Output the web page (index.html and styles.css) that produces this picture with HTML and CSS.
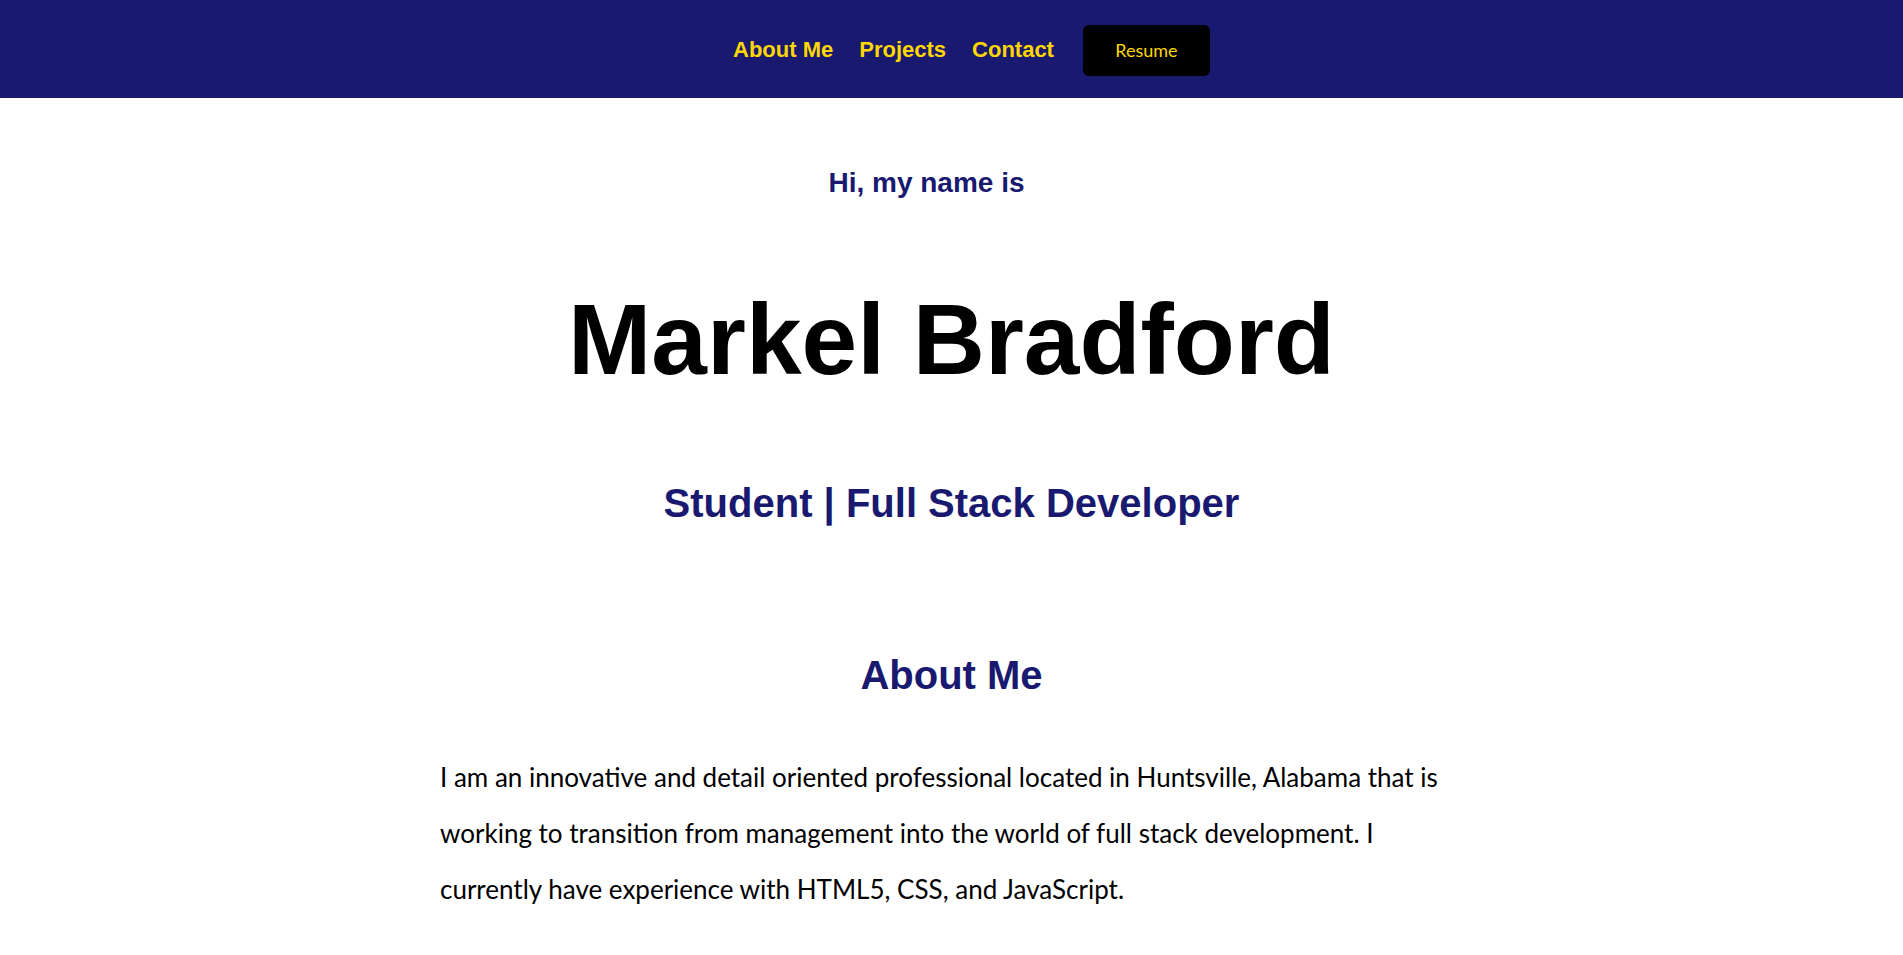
FILE: index.html
```html
<!DOCTYPE html>
<html lang="en">
<head>
<meta charset="utf-8">
<title>Markel Bradford</title>
<link rel="stylesheet" href="styles.css">
</head>
<body>
<header class="topbar">
  <ul class="nav">
    <li class="nav-item"><a class="nav-link" href="#about">About Me</a></li>
    <li class="nav-item"><a class="nav-link" href="#projects">Projects</a></li>
    <li class="nav-item"><a class="nav-link" href="#contact">Contact</a></li>
    <li><a class="resume-btn" href="#resume">Resume</a></li>
  </ul>
</header>
<main>
  <section class="hero">
    <h3 class="greeting">Hi, my name is</h3>
    <h1 class="name">Markel Bradford</h1>
    <h2 class="role">Student | Full Stack Developer</h2>
  </section>
  <section class="about" id="about">
    <h2 class="section-title">About Me</h2>
    <p class="about-text">I am an innovative and detail oriented professional located in Huntsville, Alabama that is working to transition from management into the world of full stack development. I currently have experience with HTML5, CSS, and JavaScript.</p>
  </section>
</main>
</body>
</html>
```
FILE: styles.css
```css
* { box-sizing: border-box; }
html, body { margin: 0; padding: 0; background: #ffffff; }
body { font-family: "Liberation Sans", Arial, sans-serif; color: #000; }

.topbar {
  background: #191970;
  height: 98px;
  display: flex;
  align-items: center;
  justify-content: center;
}
.nav {
  list-style: none;
  margin: 0;
  padding: 0 0 0 40px;
  display: flex;
  align-items: center;
  gap: 26px;
}
.nav-item { padding-top: 1px; }
.nav-link {
  color: #ffd700;
  text-decoration: none;
  font-weight: bold;
  font-size: 22px;
}
.resume-btn {
  display: flex;
  align-items: center;
  justify-content: center;
  width: 127px;
  height: 51px;
  margin-left: 3px;
  margin-top: 2px;
  background: #000;
  border-radius: 6px;
  color: #ffd700;
  text-decoration: none;
  font-family: "Lato", "Open Sans", sans-serif;
  font-size: 18px;
}

.hero { display: flex; flex-direction: column; align-items: center; }
.greeting {
  margin: 68px 50px 0 0;
  font-size: 28px;
  line-height: 34px;
  color: #191970;
}
.name {
  margin: 84px 0 0;
  font-size: 100px;
  line-height: 110px;
}
.role {
  margin: 85px 0 0;
  font-size: 40px;
  line-height: 48px;
  color: #191970;
}
.about { display: flex; flex-direction: column; align-items: center; }
.section-title {
  margin: 124px 0 0;
  font-size: 40px;
  line-height: 48px;
  color: #191970;
}
.about-text {
  margin: 50px 0 0;
  width: 1023px;
  font-family: "Lato", "Open Sans", sans-serif;
  font-size: 26px;
  line-height: 56px;
}
```
